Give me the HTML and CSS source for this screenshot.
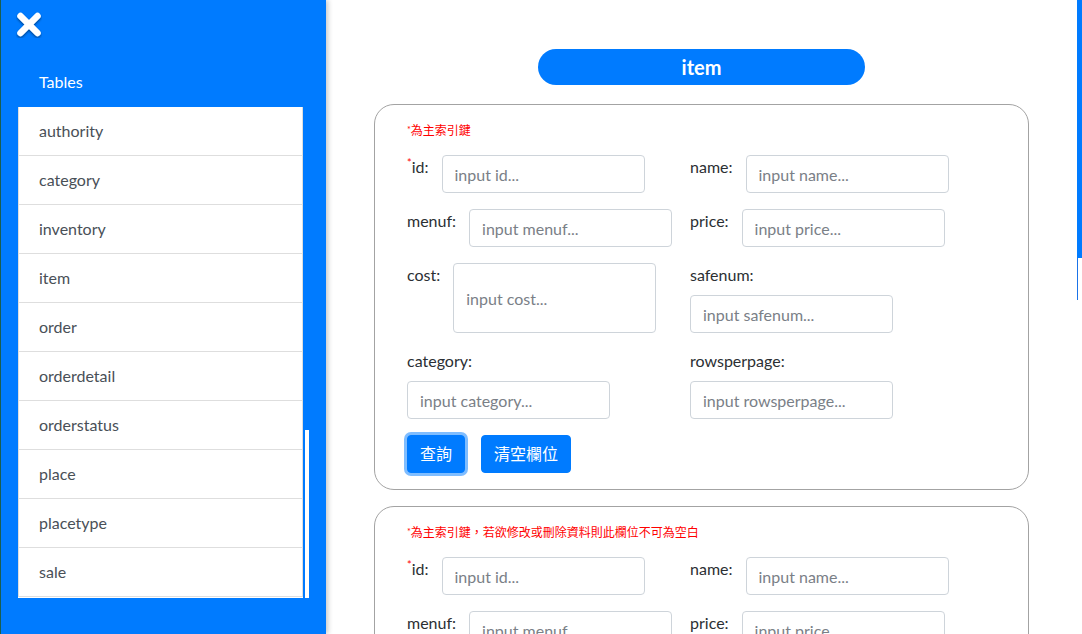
FILE: index.html
```html
<!DOCTYPE html>
<html lang="zh-Hant">
<head>
<meta charset="utf-8">
<title>item</title>
<link rel="stylesheet" href="styles.css">
</head>
<body>
<div class="app">
  <aside class="sidebar">
    <div class="close-btn">
      <svg width="26" height="26" viewBox="0 0 26 26" aria-hidden="true">
        <defs>
          <filter id="sh" x="-30%" y="-30%" width="160%" height="160%">
            <feDropShadow dx="0" dy="1.5" stdDeviation="1" flood-color="#000" flood-opacity="0.45"/>
          </filter>
        </defs>
        <g filter="url(#sh)" stroke="#fff" stroke-width="6.5" stroke-linecap="round">
          <line x1="4.5" y1="4" x2="21.5" y2="21"/>
          <line x1="21.5" y1="4" x2="4.5" y2="21"/>
        </g>
      </svg>
    </div>
    <div class="side-title">Tables</div>
    <div class="list-wrap">
      <ul class="table-list">
        <li>authority</li>
        <li>category</li>
        <li>inventory</li>
        <li>item</li>
        <li>order</li>
        <li>orderdetail</li>
        <li>orderstatus</li>
        <li>place</li>
        <li>placetype</li>
        <li>sale</li>
      </ul>
      <div class="list-track"><div class="list-thumb"></div></div>
    </div>
  </aside>

  <main class="main">
    <div class="content">
      <div class="title-pill">item</div>

      <section class="card">
        <p class="note"><span class="star">*</span>為主索引鍵</p>
        <div class="fields">
          <div class="field"><label class="lbl"><span class="star">*</span>id:</label><input class="inp" placeholder="input id..."></div>
          <div class="field"><label class="lbl">name:</label><input class="inp" placeholder="input name..."></div>
          <div class="field"><label class="lbl">menuf:</label><input class="inp" placeholder="input menuf..."></div>
          <div class="field"><label class="lbl">price:</label><input class="inp" placeholder="input price..."></div>
          <div class="field"><label class="lbl">cost:</label><input class="inp tall" placeholder="input cost..."></div>
          <div class="field stack"><label class="lbl">safenum:</label><input class="inp" placeholder="input safenum..."></div>
          <div class="field stack"><label class="lbl">category:</label><input class="inp" placeholder="input category..."></div>
          <div class="field stack"><label class="lbl">rowsperpage:</label><input class="inp" placeholder="input rowsperpage..."></div>
        </div>
        <div class="actions">
          <button class="btn focus">查詢</button>
          <button class="btn">清空欄位</button>
        </div>
      </section>

      <section class="card">
        <p class="note"><span class="star">*</span>為主索引鍵，若欲修改或刪除資料則此欄位不可為空白</p>
        <div class="fields">
          <div class="field"><label class="lbl"><span class="star">*</span>id:</label><input class="inp" placeholder="input id..."></div>
          <div class="field"><label class="lbl">name:</label><input class="inp" placeholder="input name..."></div>
          <div class="field"><label class="lbl">menuf:</label><input class="inp" placeholder="input menuf..."></div>
          <div class="field"><label class="lbl">price:</label><input class="inp" placeholder="input price..."></div>
        </div>
      </section>
    </div>
    <div class="page-track">
      <div class="page-thumb"></div>
      <div class="page-line"></div>
    </div>
  </main>
</div>
</body>
</html>
```

FILE: styles.css
```css
* { box-sizing: border-box; }

html, body {
  margin: 0;
  padding: 0;
  height: 100%;
  overflow: hidden;
}

body {
  font-family: "Lato", "Noto Sans CJK TC", sans-serif;
  font-size: 16px;
  line-height: 1.5;
  color: #212529;
  background: #fff;
}

.app {
  display: flex;
  height: 634px;
}

/* ---------- sidebar ---------- */
.sidebar {
  width: 326px;
  flex: 0 0 326px;
  background: #007bff;
  border-left: 1px solid #1b5e4f;
  box-shadow: 2px 0 5px rgba(0, 0, 0, 0.22);
  position: relative;
  z-index: 2;
  padding-top: 12px;
}

.close-btn {
  margin-left: 15px;
  width: 26px;
  height: 26px;
}
.close-btn svg { display: block; }

.side-title {
  color: #fff;
  margin-top: 32px;
  padding-left: 38px;
  line-height: 24px;
}

.list-wrap {
  display: flex;
  margin: 13px 0 0 17px;
  gap: 2px;
  align-items: stretch;
}

.table-list {
  list-style: none;
  margin: 0;
  padding: 0;
  width: 285px;
  background: #fff;
  border-bottom: 1px solid #fff;
}

.table-list li {
  padding: 12px 20px;
  line-height: 24px;
  color: #495057;
  border: 1px solid #dedede;
  border-top: none;
  background: #fff;
}

.list-track {
  width: 4px;
  display: flex;
  flex-direction: column;
  justify-content: flex-end;
}
.list-thumb {
  height: 168px;
  background: #fff;
}

/* ---------- main ---------- */
.main {
  flex: 1;
  display: flex;
  min-width: 0;
  overflow: hidden;
}

.content {
  flex: 1;
  padding-top: 49px;
  display: flex;
  flex-direction: column;
  align-items: center;
}

.title-pill {
  width: 327px;
  height: 36px;
  border-radius: 18px;
  background: #007bff;
  color: #fff;
  font-weight: 700;
  font-size: 20px;
  line-height: 36px;
  text-align: center;
  margin-bottom: 19px;
}

.card {
  width: 655px;
  flex: 0 0 auto;
  border: 1px solid #a3a3a3;
  border-radius: 20px;
  padding: 16px 32px;
  margin-bottom: 16px;
}

.note {
  margin: 0 0 16px;
  height: 18px;
  color: #ff0000;
  font-size: 12px;
  line-height: 18px;
}
.note .star { font-size: 9px; vertical-align: 2px; }

.fields {
  display: grid;
  grid-template-columns: 270px 270px;
  column-gap: 13px;
}

.field {
  display: flex;
  align-items: flex-start;
  margin-bottom: 16px;
}
.field.stack {
  flex-direction: column;
}

.lbl {
  line-height: 24px;
  height: 24px;
  margin-right: 13px;
  white-space: nowrap;
  color: #2b2f33;
}
.field.stack .lbl { margin-bottom: 8px; }

.lbl .star {
  color: #ff0000;
  font-size: 11px;
  vertical-align: 6px;
  line-height: 0;
}

.inp {
  width: 203px;
  height: 38px;
  padding: 6px 12px;
  border: 1px solid #ced4da;
  border-radius: 4px;
  font: inherit;
  color: #495057;
  background: #fff;
}
.inp::placeholder { color: #7a8087; }
.inp.tall { height: 70px; }

.actions {
  display: flex;
  gap: 16px;
}

.btn {
  font: inherit;
  line-height: 24px;
  height: 38px;
  padding: 6px 12px;
  color: #fff;
  background: #007bff;
  border: 1px solid #007bff;
  border-radius: 4px;
}
.btn.focus {
  box-shadow: 0 0 0 3px rgba(0, 123, 255, 0.5);
}

.page-track {
  width: 5px;
  flex: 0 0 5px;
  display: flex;
  flex-direction: column;
}
.page-thumb {
  height: 258px;
  background: #007bff;
}
.page-line {
  height: 42px;
  width: 1px;
  background: #1a73e8;
}
```
